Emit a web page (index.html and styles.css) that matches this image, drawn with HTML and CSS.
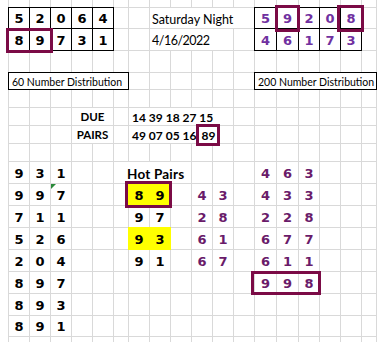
FILE: index.html
```html
<!DOCTYPE html>
<html>
<head>
<meta charset="utf-8">
<link rel="stylesheet" href="styles.css">
</head>
<body>
<div class="sheet">
<div></div><div></div><div></div><div></div><div></div><div></div><div></div><div></div><div></div><div></div><div></div><div></div><div></div><div></div><div></div><div></div><div></div><div></div>

<div class="n bk">5</div><div class="n bk">2</div><div class="n bk">0</div><div class="n bk">6</div><div class="n bk">4</div><div></div><div></div><div class="t sp5">Saturday Night</div><div class="n bk p">5</div><div class="n bk p rel">9<span class="box b2"></span></div><div class="n bk p">2</div><div class="n bk p">0</div><div class="n bk p rel">8<span class="box b3"></span></div><div></div>

<div class="n bk rel">8<span class="box b1"></span></div><div class="n bk">9</div><div class="n bk">7</div><div class="n bk">3</div><div class="n bk">1</div><div></div><div></div><div class="t date sp4">4/16/2022</div><div></div><div class="n bk p">4</div><div class="n bk p">6</div><div class="n bk p">1</div><div class="n bk p">7</div><div class="n bk p">3</div><div></div>

<div></div><div></div><div></div><div></div><div></div><div></div><div></div><div></div><div></div><div></div><div></div><div></div><div></div><div></div><div></div><div></div><div></div><div></div>

<div class="tb sp6">60 Number Distribution</div><div></div><div></div><div></div><div></div><div></div><div></div><div class="tb sp6">200 Number Distribution</div>

<div></div><div></div><div></div><div></div><div></div><div></div><div></div><div></div><div></div><div></div><div></div><div></div><div></div><div></div><div></div><div></div><div></div><div></div>

<div></div><div></div><div></div><div class="lbl sp2">DUE</div><div></div><div class="t b sp5">14 39 18 27 15</div><div></div><div></div><div></div><div></div><div></div><div></div><div></div>

<div></div><div></div><div></div><div class="lbl sp2">PAIRS</div><div></div><div class="t b sp5">49 07 05 16<span class="rel hl">89<span class="box b4"></span></span></div><div></div><div></div><div></div><div></div><div></div><div></div><div></div>

<div></div><div></div><div></div><div></div><div></div><div></div><div></div><div></div><div></div><div></div><div></div><div></div><div></div><div></div><div></div><div></div><div></div><div></div>

<div class="n">9</div><div class="n">3</div><div class="n">1</div><div></div><div></div><div class="hot sp4">Hot Pairs</div><div></div><div></div><div></div><div class="n dp">4</div><div class="n dp">6</div><div class="n dp">3</div><div></div><div></div><div></div>

<div class="n">9</div><div class="n">9</div><div class="n rel tri">7</div><div></div><div></div><div></div><div class="n y rel">8<span class="box b5"></span></div><div class="n y">9</div><div></div><div class="n mp">4</div><div class="n mp">3</div><div></div><div class="n dp">4</div><div class="n dp">3</div><div class="n dp">3</div><div></div><div></div><div></div>

<div class="n">7</div><div class="n">1</div><div class="n">1</div><div></div><div></div><div></div><div class="n">9</div><div class="n">7</div><div></div><div class="n mp">2</div><div class="n mp">8</div><div></div><div class="n dp">2</div><div class="n dp">2</div><div class="n dp">8</div><div></div><div></div><div></div>

<div class="n">5</div><div class="n">2</div><div class="n">6</div><div></div><div></div><div></div><div class="n y">9</div><div class="n y">3</div><div></div><div class="n mp">6</div><div class="n mp">1</div><div></div><div class="n dp">6</div><div class="n dp">7</div><div class="n dp">7</div><div></div><div></div><div></div>

<div class="n">2</div><div class="n">0</div><div class="n">4</div><div></div><div></div><div></div><div class="n">9</div><div class="n">1</div><div></div><div class="n mp">6</div><div class="n mp">7</div><div></div><div class="n dp">6</div><div class="n dp">1</div><div class="n dp">1</div><div></div><div></div><div></div>

<div class="n">8</div><div class="n">9</div><div class="n">7</div><div></div><div></div><div></div><div></div><div></div><div></div><div></div><div></div><div></div><div class="n dp rel">9<span class="box b6"></span></div><div class="n dp">9</div><div class="n dp">8</div><div></div><div></div><div></div>

<div class="n">8</div><div class="n">9</div><div class="n">3</div><div></div><div></div><div></div><div></div><div></div><div></div><div></div><div></div><div></div><div></div><div></div><div></div><div></div><div></div><div></div>

<div class="n">8</div><div class="n">9</div><div class="n">1</div><div></div><div></div><div></div><div></div><div></div><div></div><div></div><div></div><div></div><div></div><div></div><div></div><div></div><div></div><div></div>

<div></div><div></div><div></div><div></div><div></div><div></div><div></div><div></div><div></div><div></div><div></div><div></div><div></div><div></div><div></div><div></div><div></div><div></div>
</div>
</body>
</html>
```

FILE: styles.css
```css
* { box-sizing: border-box; }
html, body { margin: 0; padding: 0; background: #fff; }
body { width: 383px; height: 342px; overflow: hidden; }

.sheet {
  margin-left: 8px;
  width: 369px;
  display: grid;
  grid-template-columns: 20px 20px 20px 20px 20px 14px 20px 20px 20px 20px 20px 20px 21px 21px 20px 20px 20px 14px;
  grid-template-rows: 7px 20px 21px 21px 16px 17px 17px 17px 17px 21px 21px 21px 21px 21px 21px 21px 20px 6px;
  gap: 1px;
  background: #d9d9d9;
  border-left: 1px solid #d9d9d9;
  border-right: 1px solid #d9d9d9;
}
.sheet > div {
  background: #fff;
  min-width: 0;
  display: flex;
  align-items: center;
  white-space: nowrap;
}

.sp2 { grid-column: span 2; }
.sp3 { grid-column: span 3; }
.sp4 { grid-column: span 4; }
.sp5 { grid-column: span 5; }
.sp6 { grid-column: span 6; }

.n {
  justify-content: center;
  font-family: "DejaVu Sans", Verdana, sans-serif;
  font-weight: bold;
  font-size: 13px;
  color: #000;
  padding-top: 1px;
}
.p { color: #7030a0; }
.mp { color: #6a1b6a; }
.dp { color: #6a1b6a; }

.t {
  font-family: Lato, "Open Sans", sans-serif;
  font-size: 12.5px;
  color: #000;
  padding-left: 2px;
  padding-top: 2px;
}
.t.date { letter-spacing: -0.5px; }
.t.b { font-weight: bold; font-size: 12px; padding-left: 3px; letter-spacing: 0; }
.hl { margin-left: 5px; }

.lbl {
  justify-content: center;
  font-family: Lato, "Open Sans", sans-serif;
  font-weight: bold;
  font-size: 11.5px;
}
.hot {
  font-family: Lato, "Open Sans", sans-serif;
  font-weight: bold;
  font-size: 13.5px;
  letter-spacing: 0.2px;
  padding-left: 13px;
  padding-top: 3px;
}
.tb {
  font-family: Lato, "Open Sans", sans-serif;
  font-size: 10.5px;
  outline: 1px solid #000;
  padding-left: 3px;
  padding-top: 1px;
}

.bk { outline: 1px solid #000; }
.y { background: #ffff00 !important; outline: 1px solid #ffff00; }

.rel { position: relative; }
.box {
  position: absolute;
  border: 3px solid #7b0b46;
  pointer-events: none;
  z-index: 2;
}
.b1 { left: -3px; top: -1px; width: 47px; height: 25px; }
.b2 { left: -2px; top: -3px; width: 25px; height: 27px; }
.b3 { left: -4px; top: -3px; width: 27px; height: 27px; }
.b4 { left: -5px; top: -4px; width: 24px; height: 22px; }
.b5 { left: -4px; top: -3px; width: 47px; height: 27px; }
.b6 { left: -4px; top: -1px; width: 70px; height: 24px; }

.tri::before {
  content: "";
  position: absolute;
  left: 0;
  top: 0;
  border-top: 5px solid #2a8a3a;
  border-right: 5px solid transparent;
}
```
